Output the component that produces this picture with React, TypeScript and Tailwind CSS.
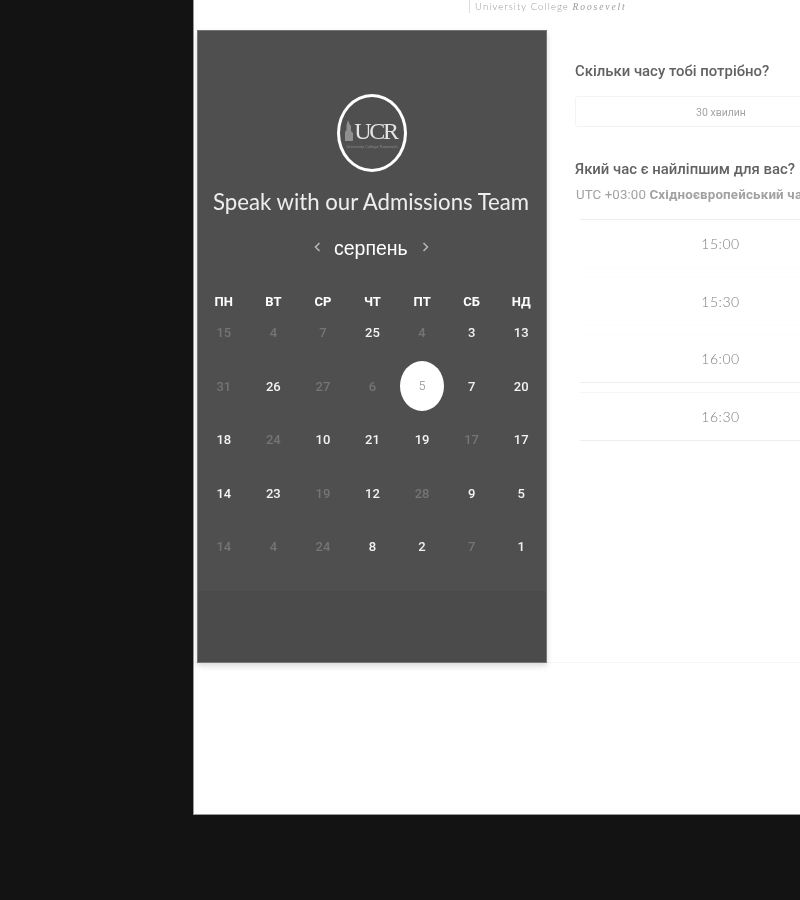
const weekdays = ['ПН', 'ВТ', 'СР', 'ЧТ', 'ПТ', 'СБ', 'НД'];

// [day, muted?, selected?]
const days: [string, boolean, boolean?][] = [
  ['15', true], ['4', true], ['7', true], ['25', false], ['4', true], ['3', false], ['13', false],
  ['31', true], ['26', false], ['27', true], ['6', true], ['5', false, true], ['7', false], ['20', false],
  ['18', false], ['24', true], ['10', false], ['21', false], ['19', false], ['17', true], ['17', false],
  ['14', false], ['23', false], ['19', true], ['12', false], ['28', true], ['9', false], ['5', false],
  ['14', true], ['4', true], ['24', true], ['8', false], ['2', false], ['7', true], ['1', false],
];

const times = [
  { label: '15:00', border: 'border-t-[#ececec] border-b-[#fcfcfc]' },
  { label: '15:30', border: 'border-t-[#fcfcfc] border-b-[#fcfcfc]' },
  { label: '16:00', border: 'border-t-[#fcfcfc] border-b-[#eeeeee]' },
  { label: '16:30', border: 'border-t-[#f6f6f6] border-b-[#eeeeee]' },
];

const Logo = () => (
  <div className="w-[70px] h-[78px] rounded-[50%] border-[3px] border-white flex flex-col items-center justify-center will-change-transform">
    <div className="flex items-end h-[24px] mt-[2px]">
      <svg width="8" height="21" viewBox="0 0 8 21" className="mb-[2px] mr-[1px]">
        <path d="M3 0 L4.5 4 L6 6 L6 11 L8 13 L8 21 L0 21 L0 12 L1.5 10 L1.5 5 Z" fill="#8f8f8f" />
      </svg>
      <span className="font-['Liberation_Serif',serif] text-[24px] leading-[24px] tracking-[-2.2px] text-[#e4e4e4] mr-[2px]">UCR</span>
    </div>
    <span className="font-['Liberation_Sans',sans-serif] text-[4px] leading-[5px] mt-[1px] text-[#8a8a8a] whitespace-nowrap">
      University College Roosevelt
    </span>
  </div>
);

const Calendar = () => (
  <div className="w-[350px] h-[633px] shrink-0 bg-[#4f4f4f] border border-[#777777] shadow-[0_3px_6px_rgba(0,0,0,0.15)] flex flex-col items-center">
    <div className="mt-[63px]">
      <Logo />
    </div>
    <h1 className="mt-[14px] mr-[2px] h-[32px] font-['Lato',sans-serif] text-[22.2px] leading-[32px] text-[#eeeeee] whitespace-nowrap will-change-transform">
      Speak with our Admissions Team
    </h1>
    <div className="mt-[15px] mr-[2px] h-[30px] flex items-center font-['Liberation_Sans',sans-serif] text-white will-change-transform">
      <svg width="7" height="10" viewBox="0 0 7 10" fill="none" stroke="#b4b4b4" strokeWidth="1.6" className="mb-[3px]">
        <path d="M5.5 1 L1.5 5 L5.5 9" />
      </svg>
      <span className="ml-[13px] mr-[14px] text-[19.5px] leading-[30px]">серпень</span>
      <svg width="7" height="10" viewBox="0 0 7 10" fill="none" stroke="#b4b4b4" strokeWidth="1.6" className="mb-[3px]">
        <path d="M1.5 1 L5.5 5 L1.5 9" />
      </svg>
    </div>
    <div className="mt-[29px] w-[347px] grid grid-cols-7 h-[14px] will-change-transform">
      {weekdays.map((d) => (
        <div key={d} className="text-center font-['Roboto',sans-serif] font-bold text-[13px] leading-[20px] text-white">
          {d}
        </div>
      ))}
    </div>
    <div className="w-[347px] grid grid-cols-7 auto-rows-[53.5px] will-change-transform">
      {days.map(([day, muted, selected], i) => (
        <div key={i} className="flex items-center justify-center">
          {selected ? (
            <div className="w-[44px] h-[50px] mb-[1px] rounded-[50%] bg-white flex items-center justify-center font-['Roboto',sans-serif] font-light text-[12px] text-[#8a8a8a]">
              {day}
            </div>
          ) : (
            <span className={`font-['Roboto',sans-serif] font-medium text-[13px] ${muted ? 'text-[#757575]' : 'text-[#f2f2f2]'}`}>
              {day}
            </span>
          )}
        </div>
      ))}
    </div>
    <div className="mt-[17px] w-full flex-1 bg-[#4b4b4b]" />
  </div>
);

const TimePicker = () => (
  <div className="ml-[28px] w-[292px] shrink-0 pt-[32px] will-change-transform">
    <h2 className="font-['Roboto',sans-serif] font-medium text-[14.9px] leading-[18px] text-[#626262] whitespace-nowrap">
      Скільки часу тобі потрібно?
    </h2>
    <div className="mt-[16px] h-[31px] pt-[2px] rounded-[3px] border border-[#f3f3f3] flex items-center justify-center font-['Roboto',sans-serif] text-[10.5px] text-[#a4a4a4]">
      30 хвилин
    </div>
    <h2 className="mt-[33px] font-['Roboto',sans-serif] font-medium text-[14.9px] leading-[18px] text-[#626262] whitespace-nowrap">
      Який час є найліпшим для вас?
    </h2>
    <p className="mt-[8px] ml-[1px] font-['Roboto',sans-serif] text-[13.3px] tracking-[0.1px] leading-[18px] text-[#a2a2a2] whitespace-nowrap">
      UTC +03:00 <span className="font-bold tracking-[0.2px]">Східноєвропейський час</span>
    </p>
    <div className="mt-[15px] ml-[5px] flex flex-col gap-[8.6px]">
      {times.map((t) => (
        <div
          key={t.label}
          className={`h-[49px] border-y ${t.border} flex items-center justify-center pr-[6px] font-['Lato',sans-serif] font-light text-[14px] tracking-[0.5px] text-[#808080]`}
        >
          {t.label}
        </div>
      ))}
    </div>
  </div>
);

export default function App() {
  return (
    <div className="w-[800px] h-[900px] overflow-hidden bg-[#131313]">
      <div className="ml-[193px] w-[700px] h-[815px] bg-white border-l border-b border-[#999999]">
        <div className="h-[30px] flex items-start">
          <div className="ml-[275px] h-[13px] border-l border-[#dddddd] pl-[5px] pt-[1px] whitespace-nowrap text-[9.5px] leading-[12px] text-[#9a9a9a] will-change-transform">
            <span className="font-['Lato',sans-serif] font-light tracking-[1.1px]">University College </span>
            <span className="font-['Liberation_Serif',serif] italic tracking-[1.9px]">Roosevelt</span>
          </div>
        </div>
        <div className="flex h-[633px] border-b border-[#f5f5f5] pl-[3px]">
          <Calendar />
          <TimePicker />
        </div>
      </div>
    </div>
  );
}
